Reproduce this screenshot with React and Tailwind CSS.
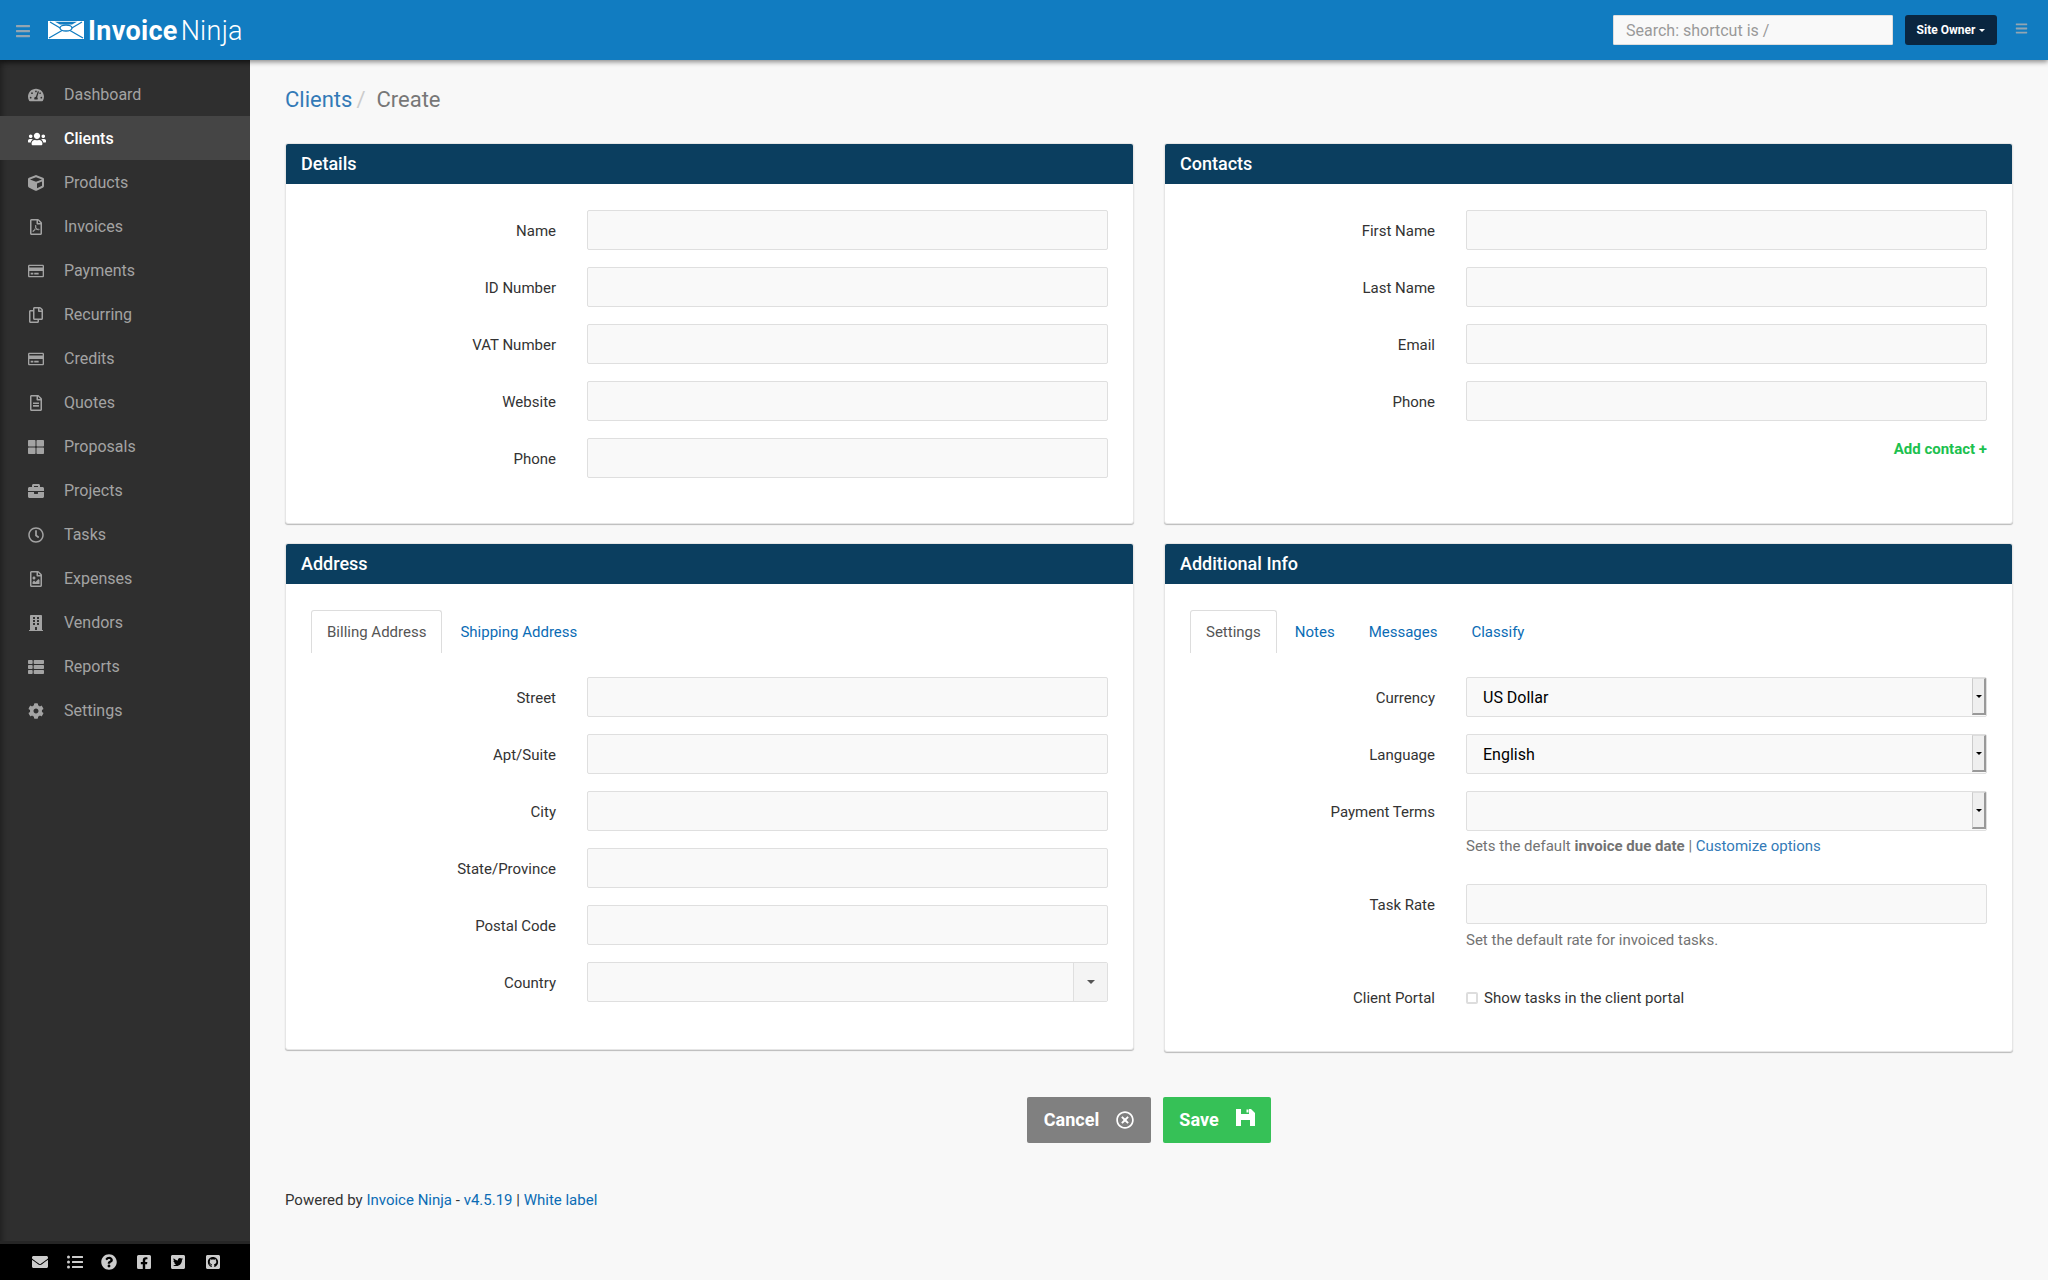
import {
  FaBars,
  FaBriefcase,
  FaBuilding,
  FaCog,
  FaCube,
  FaEnvelope,
  FaFacebookSquare,
  FaGithubSquare,
  FaListUl,
  FaQuestionCircle,
  FaRegClock,
  FaRegCopy,
  FaRegCreditCard,
  FaRegFileAlt,
  FaRegFileImage,
  FaRegFilePdf,
  FaRegTimesCircle,
  FaTachometerAlt,
  FaThLarge,
  FaThList,
  FaTwitterSquare,
  FaUsers,
} from "react-icons/fa";

const navItems = [
  { label: "Dashboard", icon: FaTachometerAlt },
  { label: "Clients", icon: FaUsers, active: true },
  { label: "Products", icon: FaCube },
  { label: "Invoices", icon: FaRegFilePdf },
  { label: "Payments", icon: FaRegCreditCard },
  { label: "Recurring", icon: FaRegCopy },
  { label: "Credits", icon: FaRegCreditCard },
  { label: "Quotes", icon: FaRegFileAlt },
  { label: "Proposals", icon: FaThLarge },
  { label: "Projects", icon: FaBriefcase },
  { label: "Tasks", icon: FaRegClock },
  { label: "Expenses", icon: FaRegFileImage },
  { label: "Vendors", icon: FaBuilding },
  { label: "Reports", icon: FaThList },
  { label: "Settings", icon: FaCog },
];

const footerIcons = [
  FaEnvelope,
  FaListUl,
  FaQuestionCircle,
  FaFacebookSquare,
  FaTwitterSquare,
  FaGithubSquare,
];

const Logo = () => (
  <svg width="36" height="18" viewBox="0 0 36 18" className="shrink-0">
    <rect width="36" height="18" fill="#fff" />
    <path d="M2 1 L13 7.5 M34 1 L23 7.5 M1 17 L14 9.5 M35 17 L22 9.5" stroke="#117cc1" strokeWidth="1.3" />
    <path d="M7 0.8 H29 L24 3.5 H12 Z" fill="#117cc1" />
    <ellipse cx="18" cy="7" rx="6" ry="3" fill="#fff" stroke="#117cc1" strokeWidth="1.3" />
  </svg>
);

const SaveIcon = () => (
  <svg width="19" height="17" viewBox="0 0 19 17" className="-translate-y-[2px]">
    <path fill="#fff" fillRule="evenodd" d="M0 0 H15 L19 4 V17 H14 V11 H5 V17 H0 Z M5 0 V5 H13 V0 Z" />
    <rect x="10.5" y="0.5" width="2" height="3" fill="#fff" />
  </svg>
);

const Field = ({ label, children }) => (
  <div className="flex items-center gap-[31px]">
    <label className="w-[245px] pt-[2px] text-right text-[15px] text-[#333]">{label}</label>
    <div className="flex-1">{children}</div>
  </div>
);

const TextInput = () => (
  <input
    type="text"
    className="block h-10 w-full rounded-[2px] border border-[#dfdfdf] bg-[#f9f9f9] px-3 outline-none"
  />
);

// the select with the small browser style arrow
const SelectInput = ({ value }) => (
  <div className="flex h-10 w-full items-center justify-between rounded-[2px] border border-[#dfdfdf] bg-[#f9f9f9] pl-4 text-[16px] text-black">
    <span className="pt-[1px]">{value}</span>
    <span className="flex h-[37px] w-[14px] items-center justify-center self-start border-r-2 border-b-2 border-l border-t border-r-[#999] border-b-[#999] border-l-[#ccc] border-t-[#ddd] bg-[#efefef]">
      <span className="h-0 w-0 border-x-[3px] border-t-[3px] border-x-transparent border-t-black" />
    </span>
  </div>
);

const CountrySelect = () => (
  <div className="flex h-10 w-full rounded-[2px] border border-[#dfdfdf] bg-[#f9f9f9]">
    <div className="flex-1" />
    <div className="flex w-[34px] items-center justify-center border-l border-[#dfdfdf] bg-[#f4f4f4]">
      <span className="h-0 w-0 border-x-4 border-t-4 border-x-transparent border-t-[#555]" />
    </div>
  </div>
);

const Panel = ({ title, height, children }) => (
  <section
    className={`rounded-[3px] border border-[#e6e6e6] bg-white shadow-[0_1px_1px_rgba(0,0,0,0.25)] ${height}`}
  >
    <h3 className="flex h-10 items-center rounded-t-[2px] bg-[#0b3e5f] px-[15px] pb-[2px] text-[18px] font-medium text-white">
      {title}
    </h3>
    {children}
  </section>
);

const Tabs = ({ tabs }) => (
  <div className="flex h-[43px] text-[15px]">
    {tabs.map((tab, i) => (
      <a
        key={tab}
        href="#"
        className={
          i === 0
            ? "mr-[2px] flex items-center rounded-t-[3px] border border-b-0 border-[#ddd] px-[15px] text-[#555]"
            : "mr-[2px] flex items-center border border-b-0 border-transparent px-[15px] text-[#0b6cb5]"
        }
      >
        {tab}
      </a>
    ))}
  </div>
);

const Sidebar = () => (
  <aside className="flex w-[250px] shrink-0 flex-col bg-[#2f2f2f] shadow-[inset_6px_6px_8px_-6px_rgba(0,0,0,0.55)]">
    <nav className="flex-1 pt-3">
      {navItems.map((item) => (
        <a
          key={item.label}
          href="#"
          className={`flex h-11 items-center pl-7 pt-[1px] text-[16px] ${
            item.active ? "bg-[#454545] font-medium text-white" : "text-[#a3a3a3]"
          }`}
        >
          <span className="flex w-9 shrink-0 items-center">
            <item.icon size={item.active ? 18 : 16} />
          </span>
          {item.label}
        </a>
      ))}
    </nav>
    <div className="flex h-[39px] items-center gap-[18.5px] border-t-[3px] border-[#262626] bg-black pl-8 text-[#ccc]">
      {footerIcons.map((Icon, i) => (
        <Icon key={i} size={16} />
      ))}
    </div>
  </aside>
);

const App = () => {
  return (
    <div className="flex min-h-screen flex-col bg-[#f8f8f8] font-['Roboto',sans-serif] text-[15px] text-[#333]">
      {/* NAVBAR */}
      <header className="relative z-10 flex h-[60px] items-center bg-[#117cc1] shadow-[0_2px_5px_rgba(0,0,0,0.45)]">
        <FaBars className="ml-[15px] translate-y-[1px] text-[#93a5b2]" size={16} />
        <div className="ml-[17px] flex items-center gap-1">
          <Logo />
          <span className="pt-[2px] text-[27px] leading-none tracking-[0.3px] text-white">
            <span className="font-bold">Invoice</span>
            <span className="ml-[3px] font-light">Ninja</span>
          </span>
        </div>
        <div className="ml-auto flex items-center">
          <input
            type="text"
            placeholder="Search: shortcut is /"
            className="h-[30px] w-[280px] rounded-[1px] border border-[#ddd] bg-[#f9f9f9] px-3 text-[16px] outline-none placeholder:text-[#999]"
          />
          <button className="ml-3 flex h-[30px] w-[92px] items-center justify-center gap-1 rounded-[3px] bg-[#0a2640] text-[12px] font-bold text-white">
            Site Owner
            <span className="h-0 w-0 border-x-[3.5px] border-t-[3.5px] border-x-transparent border-t-white" />
          </button>
          <FaBars className="mr-[20px] ml-[18px] -translate-y-[2px] text-[#93a5b2]" size={13} />
        </div>
      </header>

      <div className="flex flex-1">
        <Sidebar />

        <main className="flex-1 px-[35px] pt-[22px]">
          {/* BREADCRUMB */}
          <div className="flex h-[34px] items-center text-[22px]">
            <a href="#" className="text-[#337ab7]">Clients</a>
            <span className="ml-1 text-[#ccc]">/</span>
            <span className="ml-[11px] text-[#777]">Create</span>
          </div>

          <div className="mt-[27px] grid grid-cols-2 items-start gap-x-[30px] gap-y-[19px]">
            <Panel title="Details" height="h-[381px]">
              <div className="flex flex-col gap-[17px] px-[25px] pt-[26px]">
                {["Name", "ID Number", "VAT Number", "Website", "Phone"].map((l) => (
                  <Field key={l} label={l}>
                    <TextInput />
                  </Field>
                ))}
              </div>
            </Panel>

            <Panel title="Contacts" height="h-[381px]">
              <div className="flex flex-col gap-[17px] px-[25px] pt-[26px]">
                {["First Name", "Last Name", "Email", "Phone"].map((l) => (
                  <Field key={l} label={l}>
                    <TextInput />
                  </Field>
                ))}
              </div>
              <div className="mt-[17px] px-[25px] text-right text-[15px] font-bold text-[#1cc14f]">
                Add contact +
              </div>
            </Panel>

            <Panel title="Address" height="h-[507px]">
              <div className="px-[25px] pt-[26px]">
                <Tabs tabs={["Billing Address", "Shipping Address"]} />
                <div className="mt-6 flex flex-col gap-[17px]">
                  {["Street", "Apt/Suite", "City", "State/Province", "Postal Code"].map((l) => (
                    <Field key={l} label={l}>
                      <TextInput />
                    </Field>
                  ))}
                  <Field label="Country">
                    <CountrySelect />
                  </Field>
                </div>
              </div>
            </Panel>

            <Panel title="Additional Info" height="h-[509px]">
              <div className="px-[25px] pt-[26px]">
                <Tabs tabs={["Settings", "Notes", "Messages", "Classify"]} />
                <div className="mt-6 flex flex-col gap-[17px]">
                  <Field label="Currency">
                    <SelectInput value="US Dollar" />
                  </Field>
                  <Field label="Language">
                    <SelectInput value="English" />
                  </Field>
                  <Field label="Payment Terms">
                    <SelectInput value="" />
                  </Field>
                </div>
                <p className="mt-[5px] ml-[276px] text-[15px] leading-5 text-[#737373]">
                  Sets the default <b>invoice due date</b> |{" "}
                  <a href="#" className="text-[#337ab7]">Customize options</a>
                </p>
                <div className="mt-[28px]">
                  <Field label="Task Rate">
                    <TextInput />
                  </Field>
                </div>
                <p className="mt-[6px] ml-[276px] text-[15px] leading-5 text-[#737373]">
                  Set the default rate for invoiced tasks.
                </p>
                <div className="mt-[37px] flex items-center gap-[31px]">
                  <label className="w-[245px] text-right text-[15px]">Client Portal</label>
                  <label className="flex items-center gap-[6px] text-[15px]">
                    <input
                      type="checkbox"
                      className="h-3 w-3 appearance-none rounded-[2px] border-2 border-[#ddd] bg-white"
                    />
                    Show tasks in the client portal
                  </label>
                </div>
              </div>
            </Panel>
          </div>

          {/* ACTIONS */}
          <div className="mt-[45px] flex justify-center gap-3">
            <button className="flex h-[46px] w-[124px] items-center justify-center gap-[17px] rounded-[2px] bg-[#808080] pb-[1px] text-[18px] font-bold text-white">
              Cancel
              <FaRegTimesCircle size={18} />
            </button>
            <button className="flex h-[46px] w-[108px] items-center justify-center gap-[17px] rounded-[2px] bg-[#36c157] pb-[1px] text-[18px] font-bold text-white">
              Save
              <SaveIcon />
            </button>
          </div>

          <p className="mt-[47px] text-[15px] leading-5">
            Powered by <a href="#" className="text-[#0b6cb5]">Invoice Ninja</a> -{" "}
            <a href="#" className="text-[#0b6cb5]">v4.5.19</a> |{" "}
            <a href="#" className="text-[#0b6cb5]">White label</a>
          </p>
        </main>
      </div>
    </div>
  );
};

export default App;
